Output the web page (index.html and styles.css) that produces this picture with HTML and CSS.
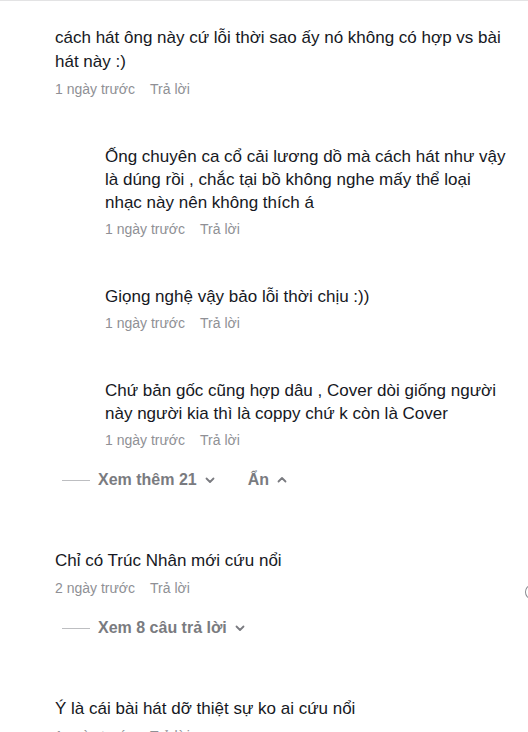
FILE: index.html
```html
<!DOCTYPE html>
<html lang="vi">
<head>
    <meta charset="UTF-8">
    <title>Bình luận</title>
    <link rel="stylesheet" href="styles.css">
</head>
<body>
    <div class="comments">
        <div class="comment">
            <p class="text">cách hát ông này cứ lỗi thời sao ấy nó không có hợp vs bài hát này :)</p>
            <div class="meta"><span>1 ngày trước</span><span>Trả lời</span></div>

            <div class="replies">
                <div class="reply">
                    <p class="text">Ống chuyên ca cổ cải lương dồ mà cách hát như vậy là dúng rồi , chắc tại bồ không nghe mấy thể loại nhạc này nên không thích á</p>
                    <div class="meta"><span>1 ngày trước</span><span>Trả lời</span></div>
                </div>
                <div class="reply">
                    <p class="text">Giọng nghệ vậy bảo lỗi thời chịu :))</p>
                    <div class="meta"><span>1 ngày trước</span><span>Trả lời</span></div>
                </div>
                <div class="reply">
                    <p class="text">Chứ bản gốc cũng hợp dâu , Cover dòi giống người này người kia thì là coppy chứ k còn là Cover</p>
                    <div class="meta"><span>1 ngày trước</span><span>Trả lời</span></div>
                </div>
            </div>

            <div class="more">
                <span class="line"></span>
                <span class="more-btn">Xem thêm 21
                    <svg width="14" height="14" viewBox="0 0 14 14"><path d="M3.5 5.5 L7 9 L10.5 5.5" fill="none" stroke="currentColor" stroke-width="1.8" stroke-linecap="round" stroke-linejoin="round"/></svg>
                </span>
                <span class="more-btn hide">Ẩn
                    <svg width="14" height="14" viewBox="0 0 14 14"><path d="M3.5 8.5 L7 5 L10.5 8.5" fill="none" stroke="currentColor" stroke-width="1.8" stroke-linecap="round" stroke-linejoin="round"/></svg>
                </span>
            </div>
        </div>

        <div class="comment">
            <p class="text">Chỉ có Trúc Nhân mới cứu nổi</p>
            <div class="meta"><span>2 ngày trước</span><span>Trả lời</span></div>
            <span class="like-edge"></span>
            <div class="more">
                <span class="line"></span>
                <span class="more-btn">Xem 8 câu trả lời
                    <svg width="14" height="14" viewBox="0 0 14 14"><path d="M3.5 5.5 L7 9 L10.5 5.5" fill="none" stroke="currentColor" stroke-width="1.8" stroke-linecap="round" stroke-linejoin="round"/></svg>
                </span>
            </div>
        </div>

        <div class="comment">
            <p class="text">Ý là cái bài hát dỡ thiệt sự ko ai cứu nổi</p>
            <div class="meta"><span>1 ngày trước</span><span>Trả lời</span></div>
        </div>
    </div>
</body>
</html>
```

FILE: styles.css
```css
/* Stile generale */
body {
    font-family: "Liberation Sans", Arial, sans-serif;
    margin: 0;
    padding: 0;
    background: #fff;
    color: #161823;
    overflow: hidden;
}

.comments {
    border-top: 1px solid #e3e3e4;
    padding: 25px 20px 0 55px;
}

.comment {
    position: relative;
    margin-bottom: 59px;
}

.text {
    margin: 0;
    font-size: 17px;
    line-height: 24px;
}

.meta {
    display: flex;
    gap: 15px;
    margin-top: 5px;
    font-size: 14px;
    line-height: 20px;
    color: #8f9095;
}

.replies {
    padding-left: 50px;
    margin-top: 46px;
    display: flex;
    flex-direction: column;
    gap: 46px;
}

.reply .text {
    line-height: 23px;
}

.more {
    display: flex;
    align-items: center;
    margin-top: 20px;
    height: 20px;
    font-size: 16px;
    font-weight: bold;
    color: #7a7b80;
}

.more .line {
    width: 28px;
    height: 1px;
    background: #bdbec1;
    margin: 0 8px 0 7px;
}

.more-btn {
    display: flex;
    align-items: center;
    gap: 6px;
}

.more-btn.hide {
    margin-left: 31px;
}

.like-edge {
    position: absolute;
    right: -29px;
    top: 36px;
    width: 10px;
    height: 12px;
    border: 1.5px solid #8a8b91;
    border-radius: 50%;
}
```
